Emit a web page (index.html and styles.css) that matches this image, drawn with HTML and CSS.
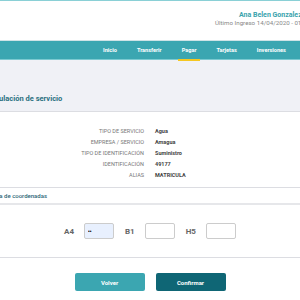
FILE: index.html
```html
<!DOCTYPE html>
<html lang="es">
<head>
  <meta charset="UTF-8">
  <title>Simulación de servicio</title>
  <link rel="stylesheet" href="styles.css">
</head>
<body>
  <div class="page">
    <header class="top">
      <div class="user">
        <div class="user-name">Ana Belen Gonzalez</div>
        <div class="user-last">Último Ingreso 14/04/2020 - 01:23 hs</div>
      </div>
    </header>

    <nav class="menu">
      <a href="#">Inicio</a>
      <a href="#">Transferir</a>
      <a href="#" class="active">Pagar</a>
      <a href="#">Tarjetas</a>
      <a href="#">Inversiones</a>
    </nav>

    <div class="title-bar">
      <h1>Simulación de servicio</h1>
    </div>

    <section class="details">
      <div class="row"><span class="label">TIPO DE SERVICIO</span><span class="value">Agua</span></div>
      <div class="row"><span class="label">EMPRESA / SERVICIO</span><span class="value">Amagua</span></div>
      <div class="row"><span class="label">TIPO DE IDENTIFICACIÓN</span><span class="value">Suministro</span></div>
      <div class="row"><span class="label">IDENTIFICACIÓN</span><span class="value">49177</span></div>
      <div class="row"><span class="label">ALIAS</span><span class="value">MATRICULA</span></div>
    </section>

    <h2 class="section-title">Tarjeta de coordenadas</h2>

    <form class="coords">
      <label for="c1">A4</label>
      <input type="password" id="c1" class="filled" value="12">
      <label for="c2">B1</label>
      <input type="password" id="c2">
      <label for="c3">H5</label>
      <input type="password" id="c3">
    </form>

    <div class="actions">
      <button type="button" class="btn btn-back">Volver</button>
      <button type="button" class="btn btn-ok">Confirmar</button>
    </div>
  </div>
</body>
</html>
```

FILE: styles.css
```css
body {
  margin: 0;
  overflow: hidden;
  font-family: Roboto, "Liberation Sans", sans-serif;
  background: #fff;
  color: #444;
}

.page {
  width: 328px;
  margin-left: -14px;
}

.top {
  height: 39px;
  border-top: 1px solid #8ad0d6;
  display: flex;
  justify-content: flex-end;
}

.user {
  width: 99px;
  padding-top: 10px;
  white-space: nowrap;
}

.user-name {
  margin-left: 24px;
  color: #3aa3ad;
  font-weight: 700;
  font-size: 7px;
  line-height: 8px;
}

.user-last {
  color: #888;
  font-size: 6.2px;
  line-height: 8px;
}

.menu {
  height: 20px;
  background: #3ba6b1;
  border-top: 1px solid #cfe3e6;
  border-bottom: 1px solid #7ccad1;
  box-sizing: border-box;
  display: flex;
  justify-content: flex-end;
  gap: 12px;
  padding-right: 24px;
}

.menu a {
  color: #fff;
  text-decoration: none;
  font-weight: 700;
  font-size: 5.6px;
  line-height: 18px;
  padding: 0 4px;
}

.menu a.active {
  border-bottom: 2px solid #f5c722;
  margin-bottom: -2px;
}

.title-bar {
  background: #f0f1f6;
  height: 51px;
  border-bottom: 1px solid #dcdde2;
  display: flex;
  align-items: flex-end;
}

.title-bar h1 {
  margin: 0 0 8px 0;
  font-size: 7.5px;
  font-weight: 700;
  color: #2a7080;
}

.details {
  padding: 13px 0 7px;
  border-bottom: 1px solid #dcdde2;
}

.row {
  display: grid;
  grid-template-columns: 158px 1fr;
  column-gap: 11px;
  height: 11px;
  align-items: center;
  font-size: 5.5px;
}

.label {
  text-align: right;
  color: #777;
}

.value {
  color: #444;
  font-weight: 700;
}

.section-title {
  margin: 0;
  padding: 0;
  text-indent: -2px;
  height: 15px;
  line-height: 15px;
  font-size: 6px;
  font-weight: 500;
  color: #2b6676;
  border-bottom: 2px solid #e6e7ea;
}

.coords {
  display: flex;
  justify-content: center;
  align-items: center;
  padding: 18px 0;
  border-bottom: 1px solid #dcdde2;
}

.coords label {
  font-size: 8px;
  font-weight: 700;
  color: #666;
  margin: 0 10px 0 0;
}

.coords input {
  width: 30px;
  height: 16px;
  box-sizing: border-box;
  border: 1px solid #ccc;
  border-radius: 2px;
  padding: 0 3px;
  margin-right: 11px;
  font-size: 5px;
  background: #fff;
}

.coords input:last-child {
  margin-right: 0;
}

.coords input.filled {
  background: #e8f0fe;
}

.actions {
  display: flex;
  justify-content: center;
  gap: 11px;
  padding-top: 15px;
}

.btn {
  width: 70px;
  height: 18px;
  border: none;
  border-radius: 2px;
  color: #fff;
  font-family: inherit;
  font-size: 6px;
  font-weight: 700;
}

.btn-back {
  background: #3ba6b1;
}

.btn-ok {
  background: #0f6675;
}
```
